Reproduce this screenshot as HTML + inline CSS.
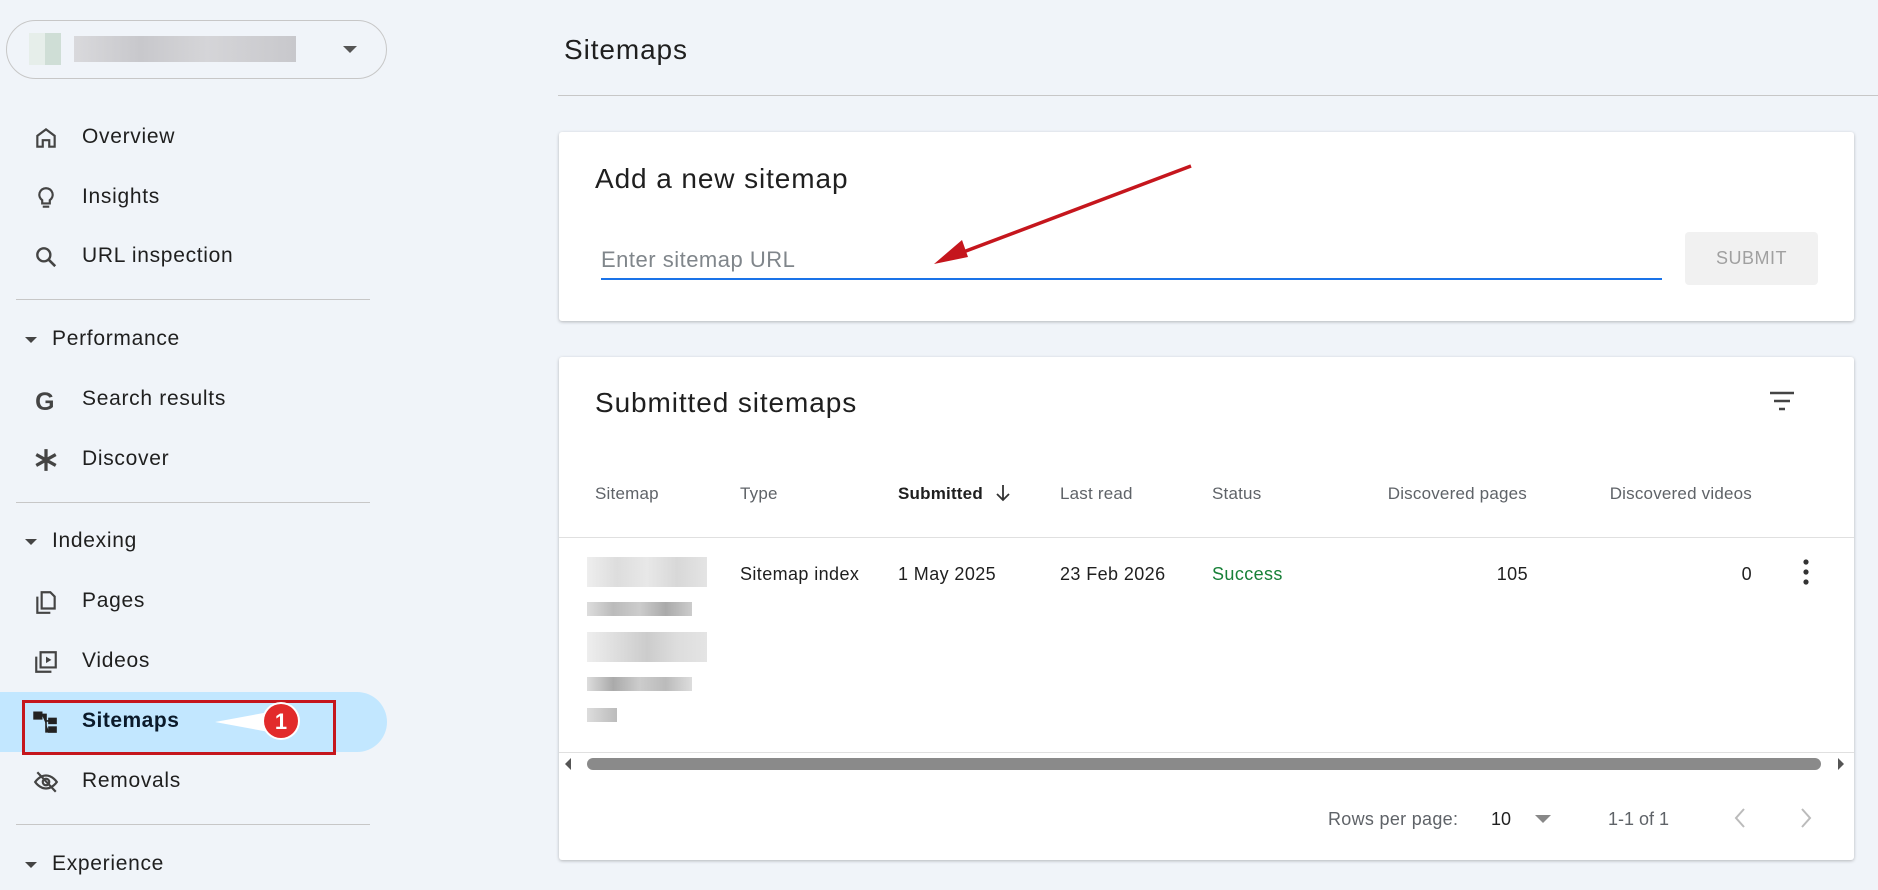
<!DOCTYPE html>
<html><head><meta charset="utf-8"><style>
*{margin:0;padding:0;box-sizing:border-box}
body{width:1878px;height:890px;background:#f0f4f9;font-family:"Liberation Sans",Arial,sans-serif;color:#1f1f1f;position:relative;overflow:hidden}
.a{position:absolute}
.nav{position:absolute;left:82px;font-size:21px;letter-spacing:.7px;color:#1f1f1f;line-height:24px}
.sec{position:absolute;left:52px;font-size:21px;letter-spacing:.7px;color:#1f1f1f;line-height:24px}
.ic{position:absolute;left:33px;width:26px;height:26px}
.hr{position:absolute;left:16px;width:354px;height:1px;background:#c7c7c7}
.tri{position:absolute;left:25px;width:0;height:0;border-left:6px solid transparent;border-right:6px solid transparent;border-top:6px solid #444}
.card{position:absolute;background:#fff;border-radius:3px;box-shadow:0 1px 3px rgba(0,0,0,.25)}
.th{position:absolute;top:484px;font-size:17px;letter-spacing:.2px;color:#5f6368;line-height:20px}
.td{position:absolute;top:563px;font-size:18px;letter-spacing:.4px;color:#1f1f1f;line-height:22px}
.blur{position:absolute;background:#ddd}
.big{position:absolute;font-size:28px;letter-spacing:.9px}
</style></head><body>
<div class="a" style="left:6px;top:20px;width:381px;height:59px;border:1px solid #c7c7c7;border-radius:30px"></div>
<div class="a" style="left:29px;top:33px;width:32px;height:32px;background:linear-gradient(90deg,#e6eeea 50%,#cfded6 50%)"></div>
<div class="a" style="left:74px;top:36px;width:222px;height:26px;background:linear-gradient(90deg,#d9d9dc,#c8c8cc 30%,#d5d5d8 60%,#c8c8cc)"></div>
<div class="a" style="left:343px;top:46px;border-left:7px solid transparent;border-right:7px solid transparent;border-top:7px solid #555"></div>

<svg class="ic" style="top:125px" viewBox="0 0 24 24"><path d="M4 20V10l8-6 8 6v10h-5v-6H9v6z" fill="none" stroke="#444" stroke-width="2"/></svg>
<div class="nav" style="top:125px">Overview</div>
<svg class="ic" style="top:185px" viewBox="0 0 24 24"><path d="M12 3a6 6 0 0 0-3.5 11v3h7v-3A6 6 0 0 0 12 3zM9 20h6" fill="none" stroke="#444" stroke-width="2"/></svg>
<div class="nav" style="top:185px">Insights</div>
<svg class="ic" style="top:244px" viewBox="0 0 24 24"><circle cx="10" cy="10" r="6" fill="none" stroke="#444" stroke-width="2.2"/><path d="M14.5 14.5l6 6" stroke="#444" stroke-width="2.4"/></svg>
<div class="nav" style="top:244px">URL inspection</div>
<div class="hr" style="top:299px"></div>
<div class="tri" style="top:337px"></div><div class="sec" style="top:327px">Performance</div>
<svg class="ic" style="top:387px" viewBox="0 0 24 24"><text x="2" y="21" font-size="23" font-weight="bold" font-family="Liberation Sans" fill="#444">G</text></svg>
<div class="nav" style="top:387px">Search results</div>
<svg class="ic" style="top:447px" viewBox="0 0 24 24"><path d="M12 2v20M3 7l18 10M21 7L3 17" stroke="#444" stroke-width="3"/></svg>
<div class="nav" style="top:447px">Discover</div>
<div class="hr" style="top:502px"></div>
<div class="tri" style="top:539px"></div><div class="sec" style="top:529px">Indexing</div>
<svg class="ic" style="top:589px" viewBox="0 0 24 24"><path d="M8 3h8l4 4v11H8zM4 7v15h12" fill="none" stroke="#444" stroke-width="2"/></svg>
<div class="nav" style="top:589px">Pages</div>
<svg class="ic" style="top:649px" viewBox="0 0 24 24"><path d="M7 3h14v14H7zM3 7v14h14" fill="none" stroke="#444" stroke-width="2"/><path d="M12 7l5 3-5 3z" fill="#444"/></svg>
<div class="nav" style="top:649px">Videos</div>
<div class="a" style="left:0;top:692px;width:387px;height:60px;background:#c2e7ff;border-radius:0 30px 30px 0"></div>
<div class="a" style="left:22px;top:700px;width:314px;height:55px;border:3px solid #c5161d"></div>
<svg class="ic" style="top:709px" viewBox="0 0 24 24"><path d="M1 3h7v6H1zM8 5h4v16h3M12 11h3" fill="#222" stroke="#222" stroke-width="1.5"/><rect x="14" y="8" width="8" height="6" fill="#222"/><rect x="14" y="16" width="8" height="6" fill="#222"/></svg>
<div class="nav" style="top:709px;font-weight:bold;color:#0b1a2a;letter-spacing:.5px">Sitemaps</div>
<svg class="a" style="left:200px;top:700px" width="110" height="44"><path d="M15 22L80 10v24z" fill="#fff"/><circle cx="81" cy="21" r="19" fill="#fff"/><circle cx="81" cy="21" r="17" fill="#e22b2b"/><text x="81" y="29" text-anchor="middle" font-size="22" font-weight="bold" fill="#fff" font-family="Liberation Sans">1</text></svg>
<svg class="ic" style="top:769px" viewBox="0 0 24 24"><path d="M2 12s4-6 10-6 10 6 10 6-4 6-10 6S2 12 2 12z" fill="none" stroke="#444" stroke-width="2"/><circle cx="12" cy="12" r="3" fill="none" stroke="#444" stroke-width="2"/><path d="M4 3l17 18" stroke="#444" stroke-width="2"/></svg>
<div class="nav" style="top:769px">Removals</div>
<div class="hr" style="top:824px"></div>
<div class="tri" style="top:862px"></div><div class="sec" style="top:852px">Experience</div>

<div class="big" style="left:564px;top:34px">Sitemaps</div>
<div class="a" style="left:558px;top:95px;width:1320px;height:1px;background:#c7c7c7"></div>

<div class="card" style="left:559px;top:132px;width:1295px;height:189px"></div>
<div class="big" style="left:595px;top:163px">Add a new sitemap</div>
<div class="a" style="left:601px;top:247px;font-size:22px;letter-spacing:.5px;color:#80868b">Enter sitemap URL</div>
<div class="a" style="left:601px;top:278px;width:1061px;height:2px;background:#1a73e8"></div>
<div class="a" style="left:1685px;top:232px;width:133px;height:53px;background:#f1f1f1;border-radius:4px;color:#a0a0a0;font-size:18px;line-height:53px;text-align:center;letter-spacing:.5px">SUBMIT</div>
<svg class="a" style="left:920px;top:160px" width="280" height="110"><path d="M271 6L30 97" stroke="#c5161d" stroke-width="3.5"/><path d="M14 104l28-24 6 17z" fill="#c5161d"/></svg>

<div class="card" style="left:559px;top:357px;width:1295px;height:503px"></div>
<div class="big" style="left:595px;top:387px">Submitted sitemaps</div>
<svg class="a" style="left:1768px;top:390px" width="28" height="24"><path d="M2 3h24M6 11h16M11 19h6" stroke="#444" stroke-width="2.6"/></svg>
<div class="th" style="left:595px">Sitemap</div>
<div class="th" style="left:740px">Type</div>
<div class="th" style="left:898px;color:#1f1f1f;font-weight:bold">Submitted</div>
<svg class="a" style="left:993px;top:483px" width="20" height="20"><path d="M10 2v15M4 11l6 6 6-6" fill="none" stroke="#333" stroke-width="1.8"/></svg>
<div class="th" style="left:1060px">Last read</div>
<div class="th" style="left:1212px">Status</div>
<div class="th" style="left:1327px;width:200px;text-align:right">Discovered pages</div>
<div class="th" style="left:1552px;width:200px;text-align:right">Discovered videos</div>
<div class="a" style="left:559px;top:537px;width:1295px;height:1px;background:#e0e0e0"></div>
<div class="blur" style="left:587px;top:557px;width:120px;height:30px;background:linear-gradient(90deg,#eee,#ddd,#e8e8e8,#d8d8d8,#e4e4e4)"></div>
<div class="blur" style="left:587px;top:602px;width:105px;height:14px;background:linear-gradient(90deg,#ddd,#bbb,#ccc,#aaa,#ccc)"></div>
<div class="blur" style="left:587px;top:632px;width:120px;height:30px;background:linear-gradient(90deg,#eee,#ddd,#ccc,#ddd,#e4e4e4)"></div>
<div class="blur" style="left:587px;top:677px;width:105px;height:14px;background:linear-gradient(90deg,#ddd,#aaa,#ccc,#bbb,#ddd)"></div>
<div class="blur" style="left:587px;top:708px;width:30px;height:14px;background:linear-gradient(90deg,#ddd,#bbb)"></div>
<div class="td" style="left:740px">Sitemap index</div>
<div class="td" style="left:898px">1 May 2025</div>
<div class="td" style="left:1060px">23 Feb 2026</div>
<div class="td" style="left:1212px;color:#188038">Success</div>
<div class="td" style="left:1428px;width:100px;text-align:right">105</div>
<div class="td" style="left:1652px;width:100px;text-align:right">0</div>
<svg class="a" style="left:1798px;top:558px" width="16" height="28"><circle cx="8" cy="4" r="2.6" fill="#333"/><circle cx="8" cy="14" r="2.6" fill="#333"/><circle cx="8" cy="24" r="2.6" fill="#333"/></svg>
<div class="a" style="left:559px;top:752px;width:1295px;height:1px;background:#e0e0e0"></div>
<svg class="a" style="left:563px;top:757px" width="10" height="14"><path d="M8 1L2 7l6 6z" fill="#555"/></svg>
<div class="a" style="left:587px;top:758px;width:1234px;height:12px;background:#8a8a8a;border-radius:6px"></div>
<svg class="a" style="left:1836px;top:757px" width="10" height="14"><path d="M2 1l6 6-6 6z" fill="#555"/></svg>
<div class="a" style="left:1328px;top:809px;font-size:18px;letter-spacing:.3px;color:#5f6368">Rows per page:</div>
<div class="a" style="left:1491px;top:809px;font-size:18px;color:#1f1f1f">10</div>
<div class="a" style="left:1535px;top:815px;border-left:8px solid transparent;border-right:8px solid transparent;border-top:8px solid #888"></div>
<div class="a" style="left:1608px;top:809px;font-size:18px;color:#5f6368">1-1 of 1</div>
<svg class="a" style="left:1732px;top:806px" width="16" height="24"><path d="M12 3L4 12l8 9" fill="none" stroke="#bbb" stroke-width="2"/></svg>
<svg class="a" style="left:1798px;top:806px" width="16" height="24"><path d="M4 3l8 9-8 9" fill="none" stroke="#bbb" stroke-width="2"/></svg>
</body></html>
